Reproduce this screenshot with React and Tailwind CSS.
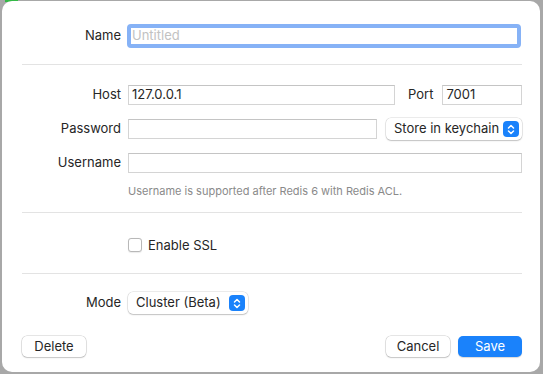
import React from 'react';

const font = { fontFamily: 'Inter, "Liberation Sans", sans-serif' };

function Stepper() {
  return (
    <span className="flex h-[16px] w-[16px] items-center justify-center rounded-[4px] bg-[#1a82fb]">
      <svg width="8" height="11" viewBox="0 0 8 11" fill="none" stroke="white" strokeWidth="1.5" strokeLinecap="round" strokeLinejoin="round">
        <path d="M1.5 4 L4 1.5 L6.5 4" />
        <path d="M1.5 7 L4 9.5 L6.5 7" />
      </svg>
    </span>
  );
}

function Popup({ label, className }) {
  return (
    <div className={`flex h-[22px] items-center justify-between rounded-[5px] bg-white pl-[8px] pr-[3px] text-[13px] text-[#262626] shadow-[0_0_0_0.5px_rgba(0,0,0,0.15),0_1px_1.5px_rgba(0,0,0,0.18)] ${className}`}>
      <span>{label}</span>
      <Stepper />
    </div>
  );
}

function Field({ value, className }) {
  return (
    <div className={`flex h-[20px] items-center border border-[#d4d4d4] border-t-[#c4c4c4] bg-white px-[3px] text-[13px] text-[#262626] ${className}`}>
      {value}
    </div>
  );
}

function Row({ label, children, className = '' }) {
  return (
    <div className={`flex items-center ${className}`}>
      <div className="w-[99px] text-right text-[13px] text-[#262626]">{label}</div>
      {children}
    </div>
  );
}

function Divider({ className = '' }) {
  return <div className={`h-px bg-[#e3e3e3] ${className}`} />;
}

function Button({ children, primary, className = '' }) {
  return (
    <button
      className={`flex h-[21px] w-[64px] items-center justify-center rounded-[5px] text-[13px] ${
        primary
          ? 'bg-[#1a82fb] text-white shadow-[0_1px_1px_rgba(0,0,0,0.15)]'
          : 'bg-white text-[#262626] shadow-[0_0_0_0.5px_rgba(0,0,0,0.2),0_1px_1.5px_rgba(0,0,0,0.15)]'
      } ${className}`}
    >
      {children}
    </button>
  );
}

export default function App() {
  return (
    <div className="relative h-[374px] w-[543px] overflow-hidden bg-[#a8a8a8] pl-[2px] pt-px" style={font}>
      <div className="absolute left-[5px] top-0 h-[2px] w-[13px] bg-[#34b847]" />
      <div className="relative h-[371px] w-[538px] rounded-[10px] bg-white pl-[20px] pr-[18px]">
        <Row label="Name" className="pt-[23px]">
          <div className="ml-[6px] flex h-[24px] flex-1 items-center rounded-[4px] border-[4px] border-[#86b2f6] bg-white pl-px text-[13px] text-[#c2c2c2]">
            Untitled
          </div>
          <div className="w-px" />
        </Row>
        <Divider className="mt-[16px]" />

        <Row label="Host" className="mt-[20px]">
          <Field value="127.0.0.1" className="ml-[7px] w-[267px]" />
          <div className="ml-[13px] text-[13px] text-[#262626]">Port</div>
          <Field value="7001" className="ml-[9px] flex-1" />
        </Row>

        <Row label="Password" className="mt-[13px]">
          <Field value="" className="ml-[7px] w-[249px]" />
          <Popup label="Store in keychain" className="ml-[9px] flex-1" />
        </Row>

        <Row label="Username" className="mt-[13px]">
          <Field value="" className="ml-[7px] flex-1" />
        </Row>

        <div className="ml-[106px] mt-[10px] text-[11px] text-[#8a8a8a]">
          Username is supported after Redis 6 with Redis ACL.
        </div>

        <Divider className="mt-[12px]" />

        <div className="ml-[106px] mt-[23px] flex items-center">
          <span className="h-[14px] w-[14px] rounded-[3px] border border-[#b8b8b8] bg-white shadow-[0_0.5px_1px_rgba(0,0,0,0.08)]" />
          <span className="ml-[6px] text-[13px] text-[#262626]">Enable SSL</span>
        </div>

        <Divider className="mt-[18px]" />

        <Row label="Mode" className="mt-[18px]">
          <Popup label="Cluster (Beta)" className="ml-[7px] w-[120px]" />
        </Row>

        <div className="mt-[22px] flex items-center">
          <Button>Delete</Button>
          <div className="flex-1" />
          <Button>Cancel</Button>
          <Button primary className="ml-[8px]">Save</Button>
        </div>
      </div>
    </div>
  );
}
